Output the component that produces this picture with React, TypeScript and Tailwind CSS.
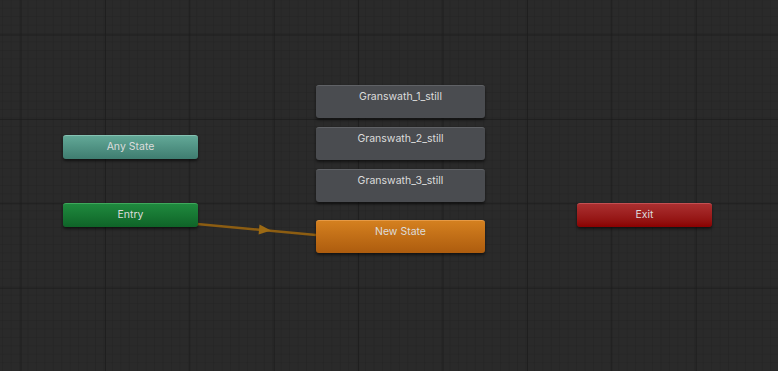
import React from "react";

type Node = {
  name: string;
  x: number;
  y: number;
  w: number;
  h: number;
  cls: string;
};

const nodes: Node[] = [
  { name: "Any State", x: 63, y: 135, w: 135, h: 24, cls: "bg-gradient-to-b from-[#62a897] to-[#3f7d70] border-t-[#86c2b3]" },
  { name: "Entry", x: 63, y: 203, w: 135, h: 24, cls: "bg-gradient-to-b from-[#1f8a3e] to-[#0f6428] border-t-[#3fa85c]" },
  { name: "Granswath_1_still", x: 316, y: 85, w: 169, h: 33, cls: "bg-[#4a4c50] border-t-[#606266]" },
  { name: "Granswath_2_still", x: 316, y: 127, w: 169, h: 33, cls: "bg-[#4a4c50] border-t-[#606266]" },
  { name: "Granswath_3_still", x: 316, y: 169, w: 169, h: 33, cls: "bg-[#4a4c50] border-t-[#606266]" },
  { name: "New State", x: 316, y: 220, w: 169, h: 33, cls: "bg-gradient-to-b from-[#d4801f] to-[#ad5c0e] border-t-[#e69a45]" },
  { name: "Exit", x: 577, y: 203, w: 135, h: 24, cls: "bg-gradient-to-b from-[#ab2f30] to-[#8a0101] border-t-[#c45052]" },
];

function Grid() {
  return (
    <svg className="absolute inset-0" width="778" height="371">
      <defs>
        <pattern id="minor" width="8.44" height="8.44" x="20" y="34" patternUnits="userSpaceOnUse">
          <path d="M8.44 0V8.44M0 8.44H8.44" stroke="#232323" strokeWidth="1" fill="none" />
        </pattern>
        <pattern id="major" width="84.4" height="84.4" x="20.5" y="34.5" patternUnits="userSpaceOnUse">
          <path d="M0 0V84.4M0 0H84.4" stroke="#1a1a1a" strokeWidth="1.5" fill="none" />
        </pattern>
      </defs>
      <rect width="778" height="371" fill="#2a2a2a" />
      <rect width="778" height="371" fill="url(#minor)" />
      <rect width="778" height="371" fill="url(#major)" />
      {/* transition Entry -> New State */}
      <line x1="197" y1="224" x2="316" y2="235" stroke="#8c5d12" strokeWidth="2.5" />
      <polygon points="259,225 271,230 259,235" fill="#9c6a14" transform="rotate(5.3 265 230)" />
    </svg>
  );
}

export default function App() {
  return (
    <div className="relative w-[778px] h-[371px] overflow-hidden bg-[#2a2a2a] font-['Inter','Noto_Sans',sans-serif]">
      <Grid />
      {nodes.map((n) => (
        <div
          key={n.name}
          className={`absolute rounded-[3px] border-t shadow-[0_2px_3px_rgba(0,0,0,0.55)] ${n.cls}`}
          style={{ left: n.x, top: n.y, width: n.w, height: n.h }}
        >
          <div className="h-[21px] flex items-center justify-center text-[10.5px] text-[#dcdcdc]">
            {n.name}
          </div>
        </div>
      ))}
    </div>
  );
}
